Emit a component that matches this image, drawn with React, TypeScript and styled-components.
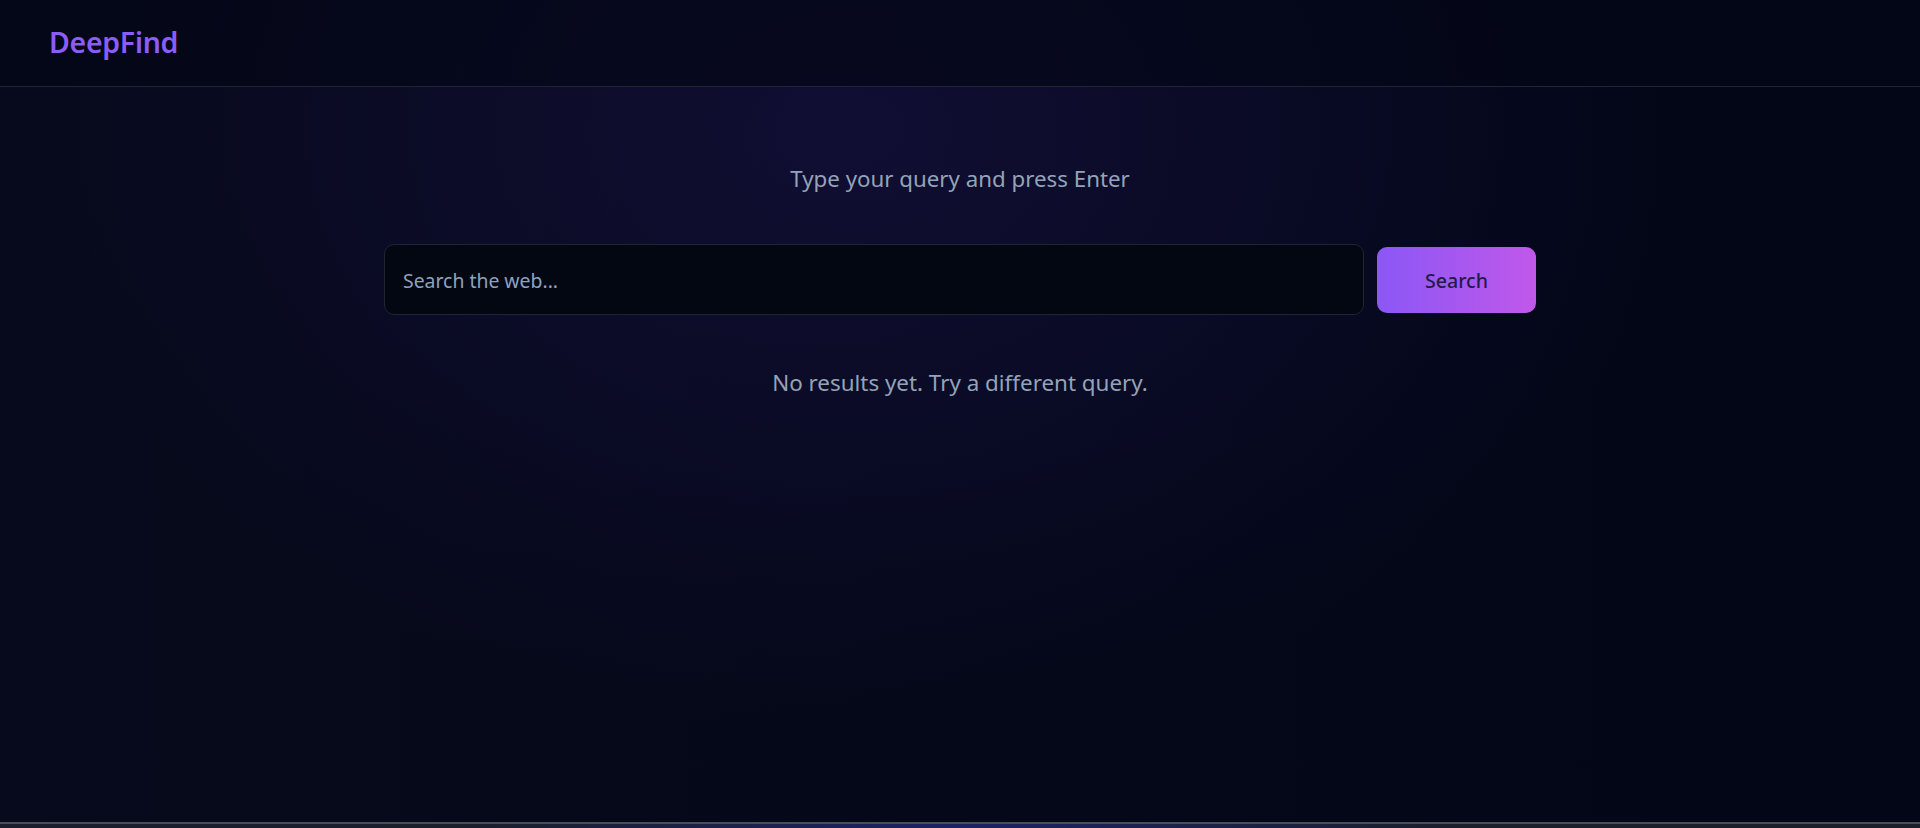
import React from "react";
import styled, { createGlobalStyle } from "styled-components";

const Global = createGlobalStyle`
  html, body { margin: 0; padding: 0; height: 100%; overflow: hidden; }
  body { background: #020617; font-family: "Noto Sans", "Open Sans", sans-serif; }
  * { box-sizing: border-box; }
`;

const Page = styled.div`
  height: 828px;
  display: flex;
  flex-direction: column;
  background:
    radial-gradient(ellipse 820px 600px at 855px 130px, rgba(28, 20, 78, 0.5), rgba(28, 20, 78, 0) 100%),
    linear-gradient(90deg, #070a1c 0%, #040818 50%, #020617 100%);
`;

const Header = styled.header`
  height: 87px;
  flex: none;
  display: flex;
  align-items: center;
  padding: 0 49px 2px;
  border-bottom: 1px solid #1e2535;
  background: rgba(3, 6, 22, 0.65);
`;

const Logo = styled.div`
  font-size: 28.5px;
  font-weight: 600;
  color: #8b5cf6;
  letter-spacing: -0.3px;
`;

const Main = styled.main`
  flex: 1;
  display: flex;
  flex-direction: column;
  align-items: center;
  padding-top: 76px;
`;

const Subtitle = styled.p`
  margin: 0;
  height: 32px;
  line-height: 32px;
  font-size: 22.3px;
  color: #94a3b8;
`;

const SearchRow = styled.form`
  margin-top: 49px;
  width: 1152px;
  display: flex;
  align-items: center;
  gap: 13px;
`;

const SearchInput = styled.input`
  flex: 1;
  height: 71px;
  padding: 2px 18px 0;
  border: 1px solid #1e2535;
  border-radius: 10px;
  background: #030712;
  color: #e2e8f0;
  font-family: inherit;
  font-size: 19.4px;
  outline: none;
  &::placeholder { color: #8ea2bf; }
`;

const SearchButton = styled.button`
  width: 159px;
  height: 66px;
  padding-top: 2px;
  border: none;
  border-radius: 10px;
  background: linear-gradient(90deg, #8b57f6 0%, #c058ea 100%);
  color: #1f1b4a;
  font-family: inherit;
  font-size: 19.6px;
  font-weight: 500;
  cursor: pointer;
`;

const Message = styled.p`
  margin: 52px 0 0;
  height: 32px;
  line-height: 32px;
  font-size: 22.4px;
  color: #94a3b8;
`;

const BottomStrip = styled.div`
  height: 6px;
  flex: none;
  border-top: 2px solid #4a4e59;
  background: radial-gradient(ellipse 500px 20px at 50% 100%, #1a2466, #1b1e2c 100%);
`;

export default function App() {
  return (
    <>
      <Global />
      <Page>
        <Header>
          <Logo>DeepFind</Logo>
        </Header>
        <Main>
          <Subtitle>Type your query and press Enter</Subtitle>
          <SearchRow onSubmit={(e) => e.preventDefault()}>
            <SearchInput placeholder="Search the web..." />
            <SearchButton type="submit">Search</SearchButton>
          </SearchRow>
          <Message>No results yet. Try a different query.</Message>
        </Main>
        <BottomStrip />
      </Page>
    </>
  );
}
